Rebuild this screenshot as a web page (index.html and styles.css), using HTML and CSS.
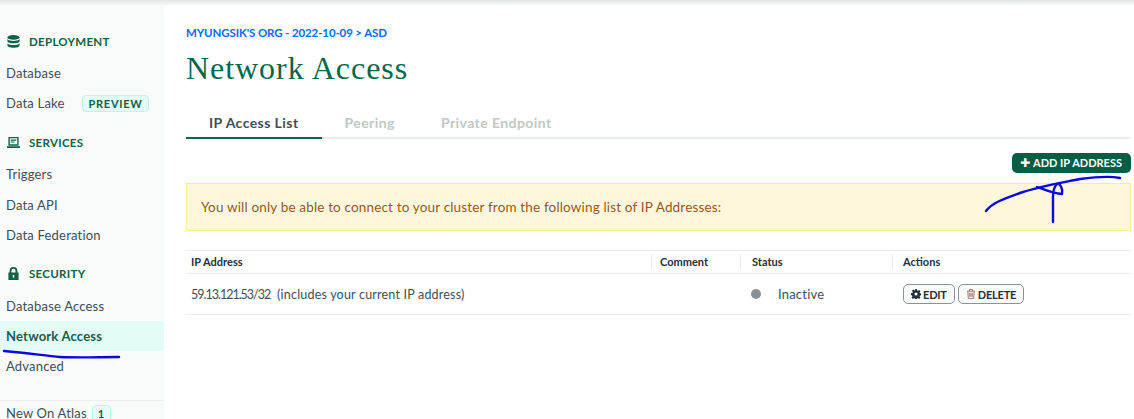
FILE: index.html
```html
<!DOCTYPE html>
<html lang="en">
<head>
	<meta charset="UTF-8">
	<title>Network Access</title>
	<link rel="stylesheet" href="styles.css">
</head>
<body>
	<div class="page">
		<div class="sidebar">
			<div class="section">
				<div class="section-head">
					<svg class="section-icon" viewBox="0 0 14 14"><ellipse cx="7" cy="2.6" rx="6.500" ry="2.600"/><path d="M.5 4.400c1 1.500 3.800 2.100 6.500 2.100s5.500-.6 6.500-2.100v2.400C13.500 8.300 10.500 9 7 9S.5 8.300.5 6.800z"/><path d="M.5 8.800c1 1.500 3.800 2.100 6.500 2.100s5.500-.6 6.500-2.100v2.400c0 1.600-3 2.400-6.500 2.400s-6.500-.8-6.500-2.400z"/></svg>
					DEPLOYMENT
				</div>
				<a class="nav-item">Database</a>
				<a class="nav-item">Data Lake <span class="badge">PREVIEW</span></a>
			</div>
			<div class="section">
				<div class="section-head">
					<svg class="section-icon" viewBox="0 0 14 14"><path fill-rule="evenodd" d="M1.500 1h11v9.500h-11zM3 2.500V9h8V2.500z"/><path d="M0 11h14v1.800H0zM4 3.800h6V5H4zM4 5.900h4v1.200H4z"/></svg>
					SERVICES
				</div>
				<a class="nav-item">Triggers</a>
				<a class="nav-item">Data API</a>
				<a class="nav-item">Data Federation</a>
			</div>
			<div class="section">
				<div class="section-head">
					<svg class="section-icon" viewBox="0 0 14 14"><path fill-rule="evenodd" d="M1.500 6h1.300V4.200a4.200 4.200 0 0 1 8.400 0V6h1.300v8h-11zM4.800 6h4.400V4.200a2.200 2.200 0 0 0-4.400 0z"/><rect x="6.200" y="8.500" width="1.600" height="3" fill="#f9fbfa"/></svg>
					SECURITY
				</div>
				<a class="nav-item">Database Access</a>
				<a class="nav-item active">Network Access</a>
				<a class="nav-item">Advanced</a>
			</div>
			<div class="sidebar-foot">New On Atlas <span class="badge count">1</span></div>
		</div>

		<div class="main">
			<div class="crumbs">MYUNGSIK'S ORG - 2022-10-09 &gt; ASD</div>
			<h1>Network Access</h1>
			<ul class="tabs">
				<li class="current">IP Access List</li>
				<li>Peering</li>
				<li>Private Endpoint</li>
			</ul>
			<div class="toolbar">
				<button class="btn-add"><span class="plus">&#10010;</span>ADD IP ADDRESS</button>
			</div>
			<div class="notice">You will only be able to connect to your cluster from the following list of IP Addresses:</div>
			<div class="table">
				<div class="row head">
					<div class="col-ip">IP Address</div>
					<div class="col-comment">Comment</div>
					<div class="col-status">Status</div>
					<div class="col-actions">Actions</div>
				</div>
				<div class="row body">
					<div class="col-ip"><span class="ip">59.13.121.53/32</span>&nbsp;&nbsp;(includes your current IP address)</div>
					<div class="col-comment"></div>
					<div class="col-status"><span class="dot"></span>Inactive</div>
					<div class="col-actions">
						<button class="btn-small">
							<svg class="btn-icon" viewBox="0 0 16 16"><path fill="#21313c" fill-rule="evenodd" d="M6.600 0h2.800l.4 2.300 1.300.6 2-1.300 2 2-1.300 2 .6 1.300 2.300.4v2.800l-2.300.4-.6 1.300 1.300 2-2 2-2-1.300-1.300.6-.4 2.300H6.600l-.4-2.300-1.300-.6-2 1.300-2-2 1.300-2-.6-1.300L-.1 9.400V6.600l2.300-.4.6-1.300-1.300-2 2-2 2 1.300 1.300-.6zM8 5.500a2.500 2.500 0 1 0 0 5 2.500 2.500 0 0 0 0-5z"/></svg>EDIT
						</button>
						<button class="btn-small">
							<svg class="btn-icon" viewBox="0 0 16 16" fill="none" stroke="#8f5a50" stroke-width="1.300"><path d="M1.500 3.500h13M5.500 3.500V1h5v2.500M3 3.500l.6 11.500h8.800L13 3.500M6 6v6.500M8 6v6.500M10 6v6.500"/></svg>DELETE
						</button>
					</div>
				</div>
			</div>
		</div>

		<!-- pen marks drawn over the screenshot -->
		<svg class="scribble" viewBox="0 0 1134 419">
			<path d="M4 351C30 353 45 356 60 357C80 358 100 357 119 357"/>
			<path d="M986 211C992 203 1003 199 1020 193C1040 186 1060 183 1080 179C1095 177 1110 176 1120 178"/>
			<path d="M1037 187C1045 190 1055 194 1062 194C1063 188 1060 183 1057 184C1055 186 1053 190 1053 197C1053 205 1053 213 1053 222"/>
		</svg>
	</div>
</body>
</html>
```

FILE: styles.css
```css
* {
	padding: 0;
	margin: 0;
	box-sizing: border-box;
}

body {
	font-family: Lato, "Open Sans", sans-serif;
	color: #21313c;
	background-color: #fff;
	overflow: hidden;
}

ul {
	list-style: none;
}

.page {
	width: 1134px;
	height: 419px;
	display: flex;
	position: relative;
	overflow: hidden;
}

/* shadow of the bar above the page */
.page::before {
	content: "";
	position: absolute;
	top: 0;
	left: 0;
	right: 0;
	height: 6px;
	background: linear-gradient(#e4e6e6, #f4f5f5 70%, rgba(255, 255, 255, 0));
}

/* sidebar */
.sidebar {
	width: 164px;
	flex-shrink: 0;
	padding-top: 27px;
	background-color: #f9fbfa;
	display: flex;
	flex-direction: column;
}

.section {
	margin-bottom: 10px;
}

.section-head {
	height: 30px;
	margin-bottom: 1px;
	padding: 0 0 2px 7px;
	display: flex;
	align-items: center;
	gap: 9px;
	font-size: 11.500px;
	font-weight: 700;
	letter-spacing: .3px;
	color: #116149;
}

.section-icon {
	width: 13px;
	height: 13px;
	fill: #116149;
}

.nav-item {
	height: 30.200px;
	padding-left: 6px;
	display: flex;
	align-items: center;
	font-size: 13px;
	letter-spacing: .2px;
	color: #3d4f58;
}

.nav-item.active {
	background-color: #e3fcf7;
	color: #116149;
	font-weight: 700;
}

.badge {
	margin-left: 17px;
	padding: 0 6px;
	height: 17px;
	line-height: 15px;
	font-size: 11px;
	font-weight: 700;
	letter-spacing: .7px;
	color: #116149;
	background-color: #e3fcf7;
	border: 1px solid #c0f5e6;
	border-radius: 4px;
}

.sidebar-foot {
	margin-top: 8px;
	padding: 4px 0 0 6px;
	border-top: 1px solid #e7eeec;
	display: flex;
	align-items: center;
	line-height: 11px;
	font-size: 13px;
	letter-spacing: .2px;
	color: #3d4f58;
}

.badge.count {
	margin-left: 5px;
	padding: 0 5px;
}

/* main */
.main {
	flex: 1;
	padding: 26px 3px 0 22px;
}

.crumbs {
	height: 14px;
	line-height: 14px;
	font-size: 11.500px;
	font-weight: 700;
	letter-spacing: -.12px;
	color: #016bf8;
}

h1 {
	margin-top: 8px;
	height: 40px;
	line-height: 40px;
	font-family: "Liberation Serif", serif;
	font-size: 32px;
	font-weight: 400;
	letter-spacing: .95px;
	color: #00684a;
}

.tabs {
	margin-top: 22px;
	height: 29px;
	display: flex;
	border-bottom: 2px solid #e8edeb;
}

.tabs li {
	height: 29px;
	padding: 0 23px;
	line-height: 25px;
	font-size: 14px;
	font-weight: 700;
	letter-spacing: .43px;
	color: #c1c7c6;
}

.tabs li.current {
	color: #3d4f58;
	border-bottom: 2px solid #00684a;
}

.toolbar {
	margin-top: 14px;
	display: flex;
	justify-content: flex-end;
}

.btn-add {
	height: 20px;
	padding: 0 9px 0 8px;
	font-family: inherit;
	font-size: 11px;
	font-weight: 700;
	color: #fff;
	background-color: #0a5c45;
	border: 0;
	border-radius: 5px;
}

.plus {
	margin-right: 3px;
	font-family: "DejaVu Sans", sans-serif;
	font-size: 12px;
}

.notice {
	margin-top: 10px;
	height: 48px;
	padding-left: 14px;
	line-height: 46px;
	font-size: 13.500px;
	letter-spacing: .16px;
	color: #94591f;
	background-color: #fef7db;
	border: 1px solid #fee8a0;
}

.table {
	margin-top: 19px;
	border-top: 1px solid #e8edeb;
}

.row {
	display: flex;
	align-items: center;
	border-bottom: 1px solid #e8edeb;
}

.row.head {
	height: 23px;
	padding-bottom: 2px;
	font-size: 11px;
	font-weight: 700;
	color: #21313c;
}

.row.body {
	height: 41px;
	font-size: 12.500px;
	letter-spacing: .2px;
	color: #3d4f58;
}

.row > div {
	padding-left: 5px;
}

.head > div + div {
	height: 15px;
	line-height: 15px;
	border-left: 1px solid #e8edeb;
}

.col-ip {
	width: 465px;
}

.col-comment {
	width: 89px;
}

.col-status {
	width: 152px;
}

.col-actions {
	flex: 1;
}

.head .col-comment {
	padding-left: 8px;
}

.head .col-status {
	padding-left: 11px;
}

.head .col-actions {
	padding-left: 10px;
}

.ip {
	letter-spacing: -1px;
}

.row.body .col-comment {
	padding-left: 0;
}

.row.body .col-status {
	padding-left: 11px;
	display: flex;
	align-items: center;
	font-size: 13px;
}

.row.body .col-actions {
	padding-left: 11px;
	display: flex;
	gap: 3px;
}

.dot {
	width: 10px;
	height: 10px;
	margin-right: 17px;
	border-radius: 50%;
	background-color: #889397;
}

.btn-small {
	height: 20px;
	padding: 0 7px;
	display: flex;
	align-items: center;
	gap: 2px;
	font-family: inherit;
	font-size: 11px;
	font-weight: 700;
	letter-spacing: -.2px;
	color: #21313c;
	background-color: #f9fbfa;
	border: 1px solid #889397;
	border-radius: 5px;
}

.btn-icon {
	width: 10px;
	height: 10px;
}

.scribble {
	position: absolute;
	top: 0;
	left: 0;
	width: 1134px;
	height: 419px;
	fill: none;
	stroke: #0808e0;
	stroke-width: 2.400;
	stroke-linecap: round;
	stroke-linejoin: round;
}
```
